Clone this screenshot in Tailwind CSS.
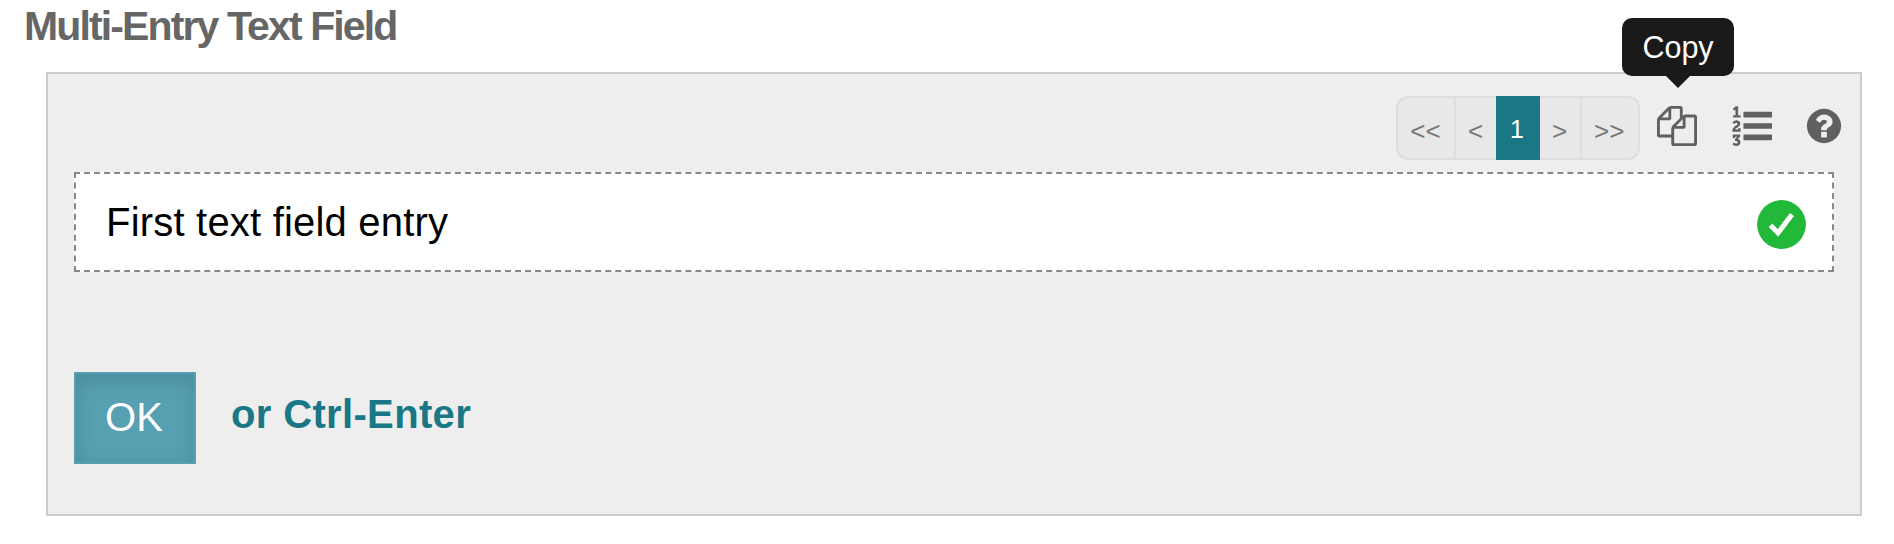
<!DOCTYPE html>
<html lang="en">
<head>
<meta charset="utf-8">
<title>Multi-Entry Text Field</title>
<script src="https://cdn.jsdelivr.net/npm/@tailwindcss/browser@4"></script>
</head>
<body class="h-[544px] overflow-hidden bg-white font-['Liberation_Sans',Arial,sans-serif]">
<main class="flex h-full flex-col">
  <h1 class="h-[72px] shrink-0 pl-6 text-[41px] leading-[52px] font-bold tracking-[-1.88px] whitespace-nowrap text-[#666]">Multi-Entry Text Field</h1>
  <section class="mr-8 ml-[46px] h-[444px] border-2 border-[#ccc] bg-[#eee] px-[26px]">
    <div class="flex h-[98px] items-start justify-end pt-[22px]">
      <nav class="flex h-16 w-[244px] rounded-xl border-2 border-[#ddd] bg-[#e8e8e8] text-[26px] leading-[66px] text-[#777]">
        <span class="w-[58px] border-r-2 border-[#ddd] pr-px text-center">&lt;&lt;</span>
        <span class="w-10 pl-3">&lt;</span>
        <span class="-my-0.5 h-16 w-11 bg-[#1a7785] pr-0.5 text-center text-[25px] leading-[66px] text-white">1</span>
        <span class="w-[42px] border-r-2 border-[#ddd] pl-3">&gt;</span>
        <span class="w-14 pl-3">&gt;&gt;</span>
      </nav>
      <div class="relative ml-[17px] mt-[9.5px] text-[#606060]">
        <svg class="size-10" viewBox="0 0 1792 1792" fill="currentColor"><path d="M1696 384q40 0 68 28t28 68v1216q0 40-28 68t-68 28h-960q-40 0-68-28t-28-68v-288h-544q-40 0-68-28t-28-68v-672q0-40 20-88t48-76l408-408q28-28 76-48t88-20h416q40 0 68 28t28 68v328q68-40 128-40h416zm-544 213l-299 299h299v-299zm-640-384l-299 299h299v-299zm196 647l316-316v-416h-384v416q0 40-28 68t-68 28h-416v640h512v-256q0-40 20-88t48-76zm956 804v-1152h-384v416q0 40-28 68t-68 28h-416v640h896z"/></svg>
        <div class="absolute bottom-[69.5px] left-[-35px] h-[58px] w-28 rounded-[10px] bg-[#191919] text-center text-[30.5px] leading-[59px] text-white">Copy
          <svg class="absolute top-[57.5px] left-11 h-3 w-6" viewBox="0 0 24 12"><path d="M0 0h24L12 12z" fill="#191919"/></svg>
        </div>
      </div>
      <svg class="mt-[9.7px] ml-[35px] size-10 text-[#606060]" viewBox="0 0 1792 1792" fill="currentColor"><path d="M381 1620q0 80-54.5 126t-135.5 46q-106 0-172-66l57-88q49 45 106 45 29 0 50.5-14.5t21.5-42.5q0-64-105-56l-26-56q8-10 32.5-43.5t42.5-54 37-38.5v-1q-16 0-48.5 1t-48.5 1v53h-106v-152h333v88l-95 115q51 12 81 49t30 88zm2-627v159h-362q-6-36-6-54 0-51 23.5-93t56.5-68 66-47.5 56.5-43.5 23.5-45q0-25-14.5-38.5t-39.5-13.5q-46 0-81 58l-85-59q24-51 71.5-79.5t105.5-28.5q73 0 123 41.5t50 112.5q0 50-34 91.5t-75 64.5-75.5 50.5-35.5 52.5h127v-60h105zm1409 319v192q0 13-9.5 22.5t-22.5 9.5h-1216q-13 0-22.5-9.5t-9.5-22.5v-192q0-14 9-23t23-9h1216q13 0 22.5 9.5t9.5 22.5zm-1408-899v99h-335v-99h107q0-41 .5-121.5t.5-121.5v-12h-2q-8 17-50 54l-71-76 136-127h106v404h108zm1408 387v192q0 13-9.5 22.5t-22.5 9.5h-1216q-13 0-22.5-9.5t-9.5-22.5v-192q0-14 9-23t23-9h1216q13 0 22.5 9.5t9.5 22.5zm0-512v192q0 13-9.5 22.5t-22.5 9.5h-1216q-13 0-22.5-9.5t-9.5-22.5v-192q0-13 9.5-22.5t22.5-9.5h1216q13 0 22.5 9.5t9.5 22.5z"/></svg>
      <svg class="mt-[9.7px] mr-[-10px] ml-8 size-10 text-[#606060]" viewBox="0 0 1792 1792" fill="currentColor"><path d="M1024 1376v-192q0-14-9-23t-23-9h-192q-14 0-23 9t-9 23v192q0 14 9 23t23 9h192q14 0 23-9t9-23zm256-672q0-88-55.5-163t-138.5-116-170-41q-243 0-371 213-15 24 8 42l132 100q7 6 19 6 16 0 25-12 53-68 86-92 34-24 86-24 48 0 85.5 26t37.5 59q0 38-20 61t-68 45q-63 28-115.5 86.5t-52.5 125.5v36q0 14 9 23t23 9h192q14 0 23-9t9-23q0-19 21.5-49.5t54.5-49.5q32-18 49-28.5t46-35 44.5-48 28-60.5 12.5-81zm384 192q0 209-103 385.5t-279.5 279.5-385.5 103-385.5-103-279.5-279.5-103-385.5 103-385.5 279.5-279.5 385.5-103 385.5 103 279.5 279.5 103 385.5z"/></svg>
    </div>
    <div class="flex h-[100px] w-[1760px] items-start justify-between border-2 border-dashed border-[#888] bg-white pr-[26px] pl-[30px]">
      <span class="text-[40px] leading-[96px] tracking-[0.2px] text-black">First text field entry</span>
      <svg class="mt-[26px] size-[49px]" viewBox="0 0 49 49"><circle cx="24.5" cy="24.5" r="24.4" fill="#22b83a"/><path d="M13.5 25.2L21 33 35 14.5" fill="none" stroke="#fff" stroke-width="5"/></svg>
    </div>
    <div class="mt-[100px] flex items-start">
      <button class="h-[92px] w-[122px] border-2 border-[#56a0b2] bg-[#56a0b2] pr-0.5 pb-0.5 text-[40px] leading-[84px] text-white shadow-[inset_0_6px_20px_rgba(0,0,0,0.125)]">OK</button>
      <span class="ml-[35px] text-[40px] leading-[84px] font-bold tracking-[0.35px] text-[#1a7785]">or Ctrl-Enter</span>
    </div>
  </section>
</main>
</body>
</html>
